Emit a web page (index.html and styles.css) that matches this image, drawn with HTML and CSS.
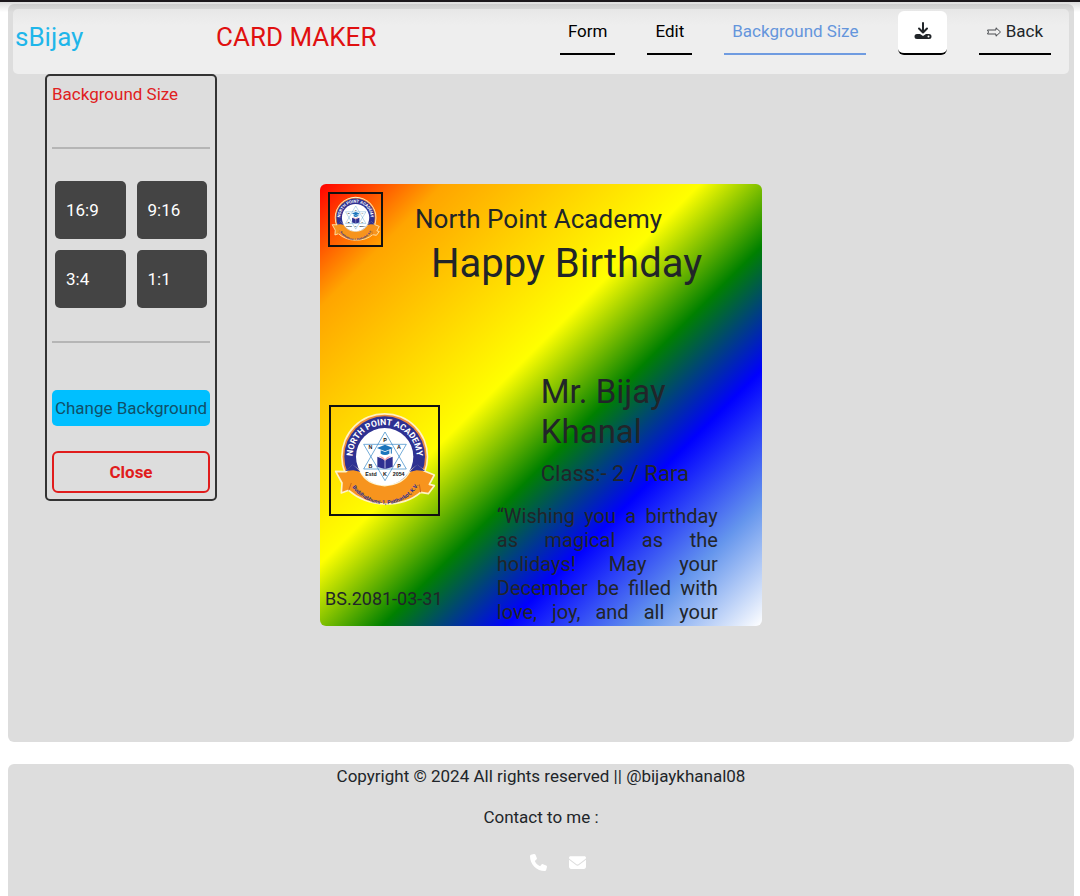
FILE: index.html
```html
<!DOCTYPE html>
<html lang="en">
<head>
<meta charset="utf-8">
<meta name="viewport" content="width=device-width, initial-scale=1">
<title>Card Maker</title>
<link rel="stylesheet" href="styles.css">
</head>
<body>
<div class="page">
  <main class="workspace">
    <header class="topbar">
      <span class="brand">sBijay</span>
      <h1 class="title">CARD MAKER</h1>
      <nav class="nav">
        <a class="nav-link" href="#form">Form</a>
        <a class="nav-link" href="#edit">Edit</a>
        <a class="nav-link active" href="#size">Background Size</a>
        <button class="nav-link download" type="button" aria-label="Download">
          <svg viewBox="0 0 18 18" width="18" height="18" aria-hidden="true">
            <path d="M9 1V10M5 6.500L9 10.500L13 6.500" fill="none" stroke="currentColor" stroke-width="2" stroke-linecap="round" stroke-linejoin="round"/>
            <path d="M3 12H6L9 14L12 12H15A2.500 2.500 0 0 1 15 17H3A2.500 2.500 0 0 1 3 12Z" fill="currentColor"/>
            <circle cx="14.500" cy="14.500" r="1" fill="#fff"/>
          </svg>
        </button>
        <a class="nav-link back" href="#back">
          <svg viewBox="0 0 14 10" width="14" height="10" aria-hidden="true"><path d="M.5 3H9V.8L13.500 5L9 9.200V7H.5L1.500 5Z" fill="none" stroke="currentColor" stroke-width=".8"/></svg>
          Back</a>
      </nav>
    </header>

    <div class="stage">
      <section class="panel" aria-labelledby="panel-title">
        <h2 class="panel-title" id="panel-title">Background Size</h2>
        <hr class="rule">
        <div class="ratios">
          <button class="ratio" type="button">16:9</button>
          <button class="ratio" type="button">9:16</button>
          <button class="ratio" type="button">3:4</button>
          <button class="ratio" type="button">1:1</button>
        </div>
        <hr class="rule">
        <button class="change" type="button">Change Background</button>
        <button class="close" type="button">Close</button>
      </section>

      <article class="card">
        <header class="card-head">
          <svg class="crest crest-small" viewBox="33 36 321 321" role="img" aria-label="School crest"><use href="#crest"/></svg>
          <div class="card-titles">
            <p class="school">North Point Academy</p>
            <p class="greeting">Happy Birthday</p>
          </div>
        </header>
        <div class="card-body">
          <div class="card-left">
            <svg class="crest crest-large" viewBox="33 36 321 321" role="img" aria-label="School crest">
              <g id="crest">
                <circle cx="194" cy="185" r="131" fill="#fff3c4"/>
                <circle cx="194" cy="185" r="126" fill="#f08a3c"/>
                <circle cx="194" cy="185" r="121" fill="#2e3192"/>
                <path d="M47 229L78 230L98 212L122 231Q140 268 194 272Q250 268 268 231L292 212L313 228L343 240L328 268L343 272L325 296L302 292Q262 327 194 327Q130 325 86 286L64 294L66 264Z" fill="#f7941e" stroke="#fff3c4" stroke-width="5" stroke-linejoin="round"/>
                <path d="M76 228L98 208L122 231L100 226ZM268 231L292 208L315 228L290 226Z" fill="#2e3192"/>
                <path d="M86 286L94 264M302 292L298 268" stroke="#c9651b" stroke-width="3"/>
                <circle cx="194" cy="185" r="86" fill="#fff"/>
                <path d="M195 111L131 222H259ZM131 148H259L195 257Z" fill="none" stroke="#2c82c4" stroke-width="2"/>
                <path d="M171 159L195 149L219 159L195 169Z" fill="#1c75bc"/>
                <path d="M182 166L195 171L208 166V176Q195 184 182 176Z" fill="#1c75bc"/>
                <path d="M214 160V176" stroke="#1c75bc" stroke-width="3"/>
                <path d="M172 185L195 194L218 185V216L195 222L172 216Z" fill="#2e3192"/>
                <path d="M177 184Q188 182 195 193Q202 182 213 184L195 197Z" fill="#f4a0a8"/>
                <path d="M195 193V221" stroke="#fff" stroke-width="2"/>
                <g class="crest-letters">
                  <text x="195" y="141">P</text><text x="151" y="163">N</text><text x="237" y="163">A</text>
                  <text x="151" y="218">B</text><text x="237" y="218">P</text><text x="195" y="244">K</text>
                  <text x="153" y="242">Estd</text><text x="236" y="242">2054</text>
                </g>
                <path id="arc-top" d="M99 200A96 96 0 1 1 289 200" fill="none"/>
                <path id="arc-bottom" d="M78 234A120 124 0 0 0 312 228" fill="none"/>
                <text class="crest-name"><textPath href="#arc-top" startOffset="50%">NORTH POINT ACADEMY</textPath></text>
                <text class="crest-place"><textPath href="#arc-bottom" startOffset="50%">Buddhabhumi-1, Pattharkot, K.V.</textPath></text>
              </g>
            </svg>
            <p class="date">BS.2081-03-31</p>
          </div>
          <div class="card-right">
            <div class="person">
              <p class="name">Mr. Bijay Khanal</p>
              <p class="class">Class:- 2 / Rara</p>
            </div>
            <p class="message">“Wishing you a birthday as magical as the holidays! May your December be filled with love, joy, and all your</p>
          </div>
        </div>
      </article>
    </div>
  </main>

  <footer class="footer">
    <p>Copyright © 2024 All rights reserved || @bijaykhanal08</p>
    <p>Contact to me :</p>
    <div class="contacts">
      <a href="#phone" aria-label="Phone"><svg viewBox="0 0 512 512" width="17" height="17"><path fill="currentColor" d="M164.900 24.600c-7.700-18.600-28-28.500-47.400-23.200l-88 24C12.100 30.200 0 46 0 64C0 311.400 200.600 512 448 512c18 0 33.800-12.100 38.600-29.500l24-88c5.300-19.400-4.600-39.700-23.200-47.400l-96-40c-16.300-6.800-35.200-2.100-46.300 11.600L304.700 368C234.300 334.700 177.300 277.700 144 207.300L193.300 167c13.700-11.200 18.400-30 11.600-46.300l-40-96z"/></svg></a>
      <a href="#mail" aria-label="Email"><svg viewBox="0 0 512 512" width="17" height="17"><path fill="currentColor" d="M48 64C21.500 64 0 85.500 0 112c0 15.100 7.100 29.300 19.200 38.400L236.800 313.600c11.400 8.500 27 8.500 38.400 0L492.800 150.400c12.100-9.100 19.200-23.300 19.200-38.400c0-26.500-21.500-48-48-48H48zM0 176V384c0 35.300 28.700 64 64 64H448c35.300 0 64-28.700 64-64V176L294.400 339.200c-22.800 17.100-54 17.100-76.800 0L0 176z"/></svg></a>
    </div>
  </footer>
</div>
</body>
</html>
```
FILE: styles.css
```css
* { box-sizing: border-box; }

body {
  margin: 0;
  border-top: 2px solid #1b171b;
  background: #fff;
  color: #212529;
  font: 17px/24px Roboto, "Liberation Sans", sans-serif;
}

h1, h2, p { margin: 0; font-weight: 400; }
button { font: inherit; color: inherit; cursor: pointer; }
a { color: inherit; text-decoration: none; }

.page {
  display: flex;
  flex-direction: column;
  gap: 22px;
  min-height: calc(100vh - 2px);
  padding: 2px 6px 0 8px;
  background: linear-gradient(#ddd, #fff 10px);
}

.workspace {
  padding: 5px 5px 116px;
  border-radius: 6px;
  background: linear-gradient(#ccc, #ddd 8px);
}

.topbar {
  display: flex;
  align-items: flex-start;
  height: 65px;
  padding: 2px 18px 0 2px;
  border-radius: 5px;
  background: linear-gradient(#e7e7e7, #eee 16px);
}

.brand, .title { padding-top: 6px; font-size: 26px; line-height: 40px; }
.brand { width: 201px; color: #1fb6ea; }
.title { color: #e01010; }

.nav { display: flex; gap: 32px; margin-left: auto; }

.nav-link {
  display: block;
  height: 44px;
  padding: 8px;
  border: 0;
  border-bottom: 2px solid #000;
  color: #000;
}
.active { border-color: #6f9be0; color: #6495dc; }
.download {
  display: grid;
  place-items: center;
  width: 49px;
  padding: 0 0 2px;
  border-radius: 6px;
  background: #fff;
  color: #212529;
}
.back { color: #212529; }

.stage {
  display: grid;
  grid-template-columns: 1fr auto 1fr;
  align-items: start;
}

.panel {
  justify-self: start;
  display: flex;
  flex-direction: column;
  width: 172px;
  margin-left: 32px;
  padding: 6px 5px;
  border: 2px solid #333;
  border-radius: 5px;
}
.panel-title { font-size: 17px; line-height: 24px; color: #e02020; }
.rule { width: 100%; margin: 41px 0 0; border: 0; border-top: 2px solid #b5b5b5; }
.ratios {
  display: grid;
  grid-template-columns: 1fr 1fr;
  gap: 11px;
  margin: 32px 3px -8px;
}
.ratio {
  height: 58px;
  padding: 0 11px;
  border: 0;
  border-radius: 5px;
  background: #444;
  color: #fff;
  text-align: left;
}
.change {
  height: 36px;
  margin-top: 47px;
  padding: 0;
  border: 0;
  border-radius: 5px;
  background: #00bfff;
  color: #10506a;
  white-space: nowrap;
}
.close {
  height: 42px;
  margin-top: 25px;
  padding: 0;
  border: 2px solid #e01c1c;
  border-radius: 6px;
  background: none;
  color: #e01c1c;
  font-weight: 700;
}

.card {
  width: 442px;
  height: 442px;
  margin-top: 110px;
  overflow: hidden;
  border-radius: 6px;
  background: linear-gradient(135deg, red, orange 14%, yellow 43%, green 57%, blue 71%, cornflowerblue 86%, white);
}
.card-head { display: flex; height: 184px; padding: 8px; }
.crest { display: block; border: 2px solid #111; }
.crest-small { width: 55px; height: 55px; }
.crest-large { width: 111px; height: 111px; }
.card-titles { padding: 7px 0 0 32px; }
.school { font-size: 26px; line-height: 40px; }
.greeting { padding-left: 16px; font-size: 40px; line-height: 50px; }
.card-body { display: grid; grid-template-columns: 40% 50%; }
.card-left { padding: 37px 0 0 9px; }
.date { margin: 71px 0 0 -4px; font-size: 18px; white-space: nowrap; }
.person { padding: 4px 0 8px 44px; }
.name { font-size: 33px; line-height: 40px; }
.class { margin-top: 8px; font-size: 22px; line-height: 28px; }
.message {
  margin-top: 8px;
  font-size: 20px;
  line-height: 24px;
  text-align: justify;
  text-align-last: justify;
}

.crest-letters { font: 700 16px "Liberation Sans", sans-serif; fill: #111; text-anchor: middle; }
.crest-name { font: 700 26px Roboto, sans-serif; fill: #fff; text-anchor: middle; }
.crest-place { font: 700 16px Roboto, sans-serif; fill: #2e3192; text-anchor: middle; }

.footer {
  display: flex;
  flex: 1;
  flex-direction: column;
  align-items: center;
  gap: 17px;
  border-radius: 6px 6px 0 0;
  background: #ddd;
}
.contacts { display: flex; gap: 22px; padding: 8px 0 0 33px; color: #fff; }
.contacts svg { display: block; }
```
